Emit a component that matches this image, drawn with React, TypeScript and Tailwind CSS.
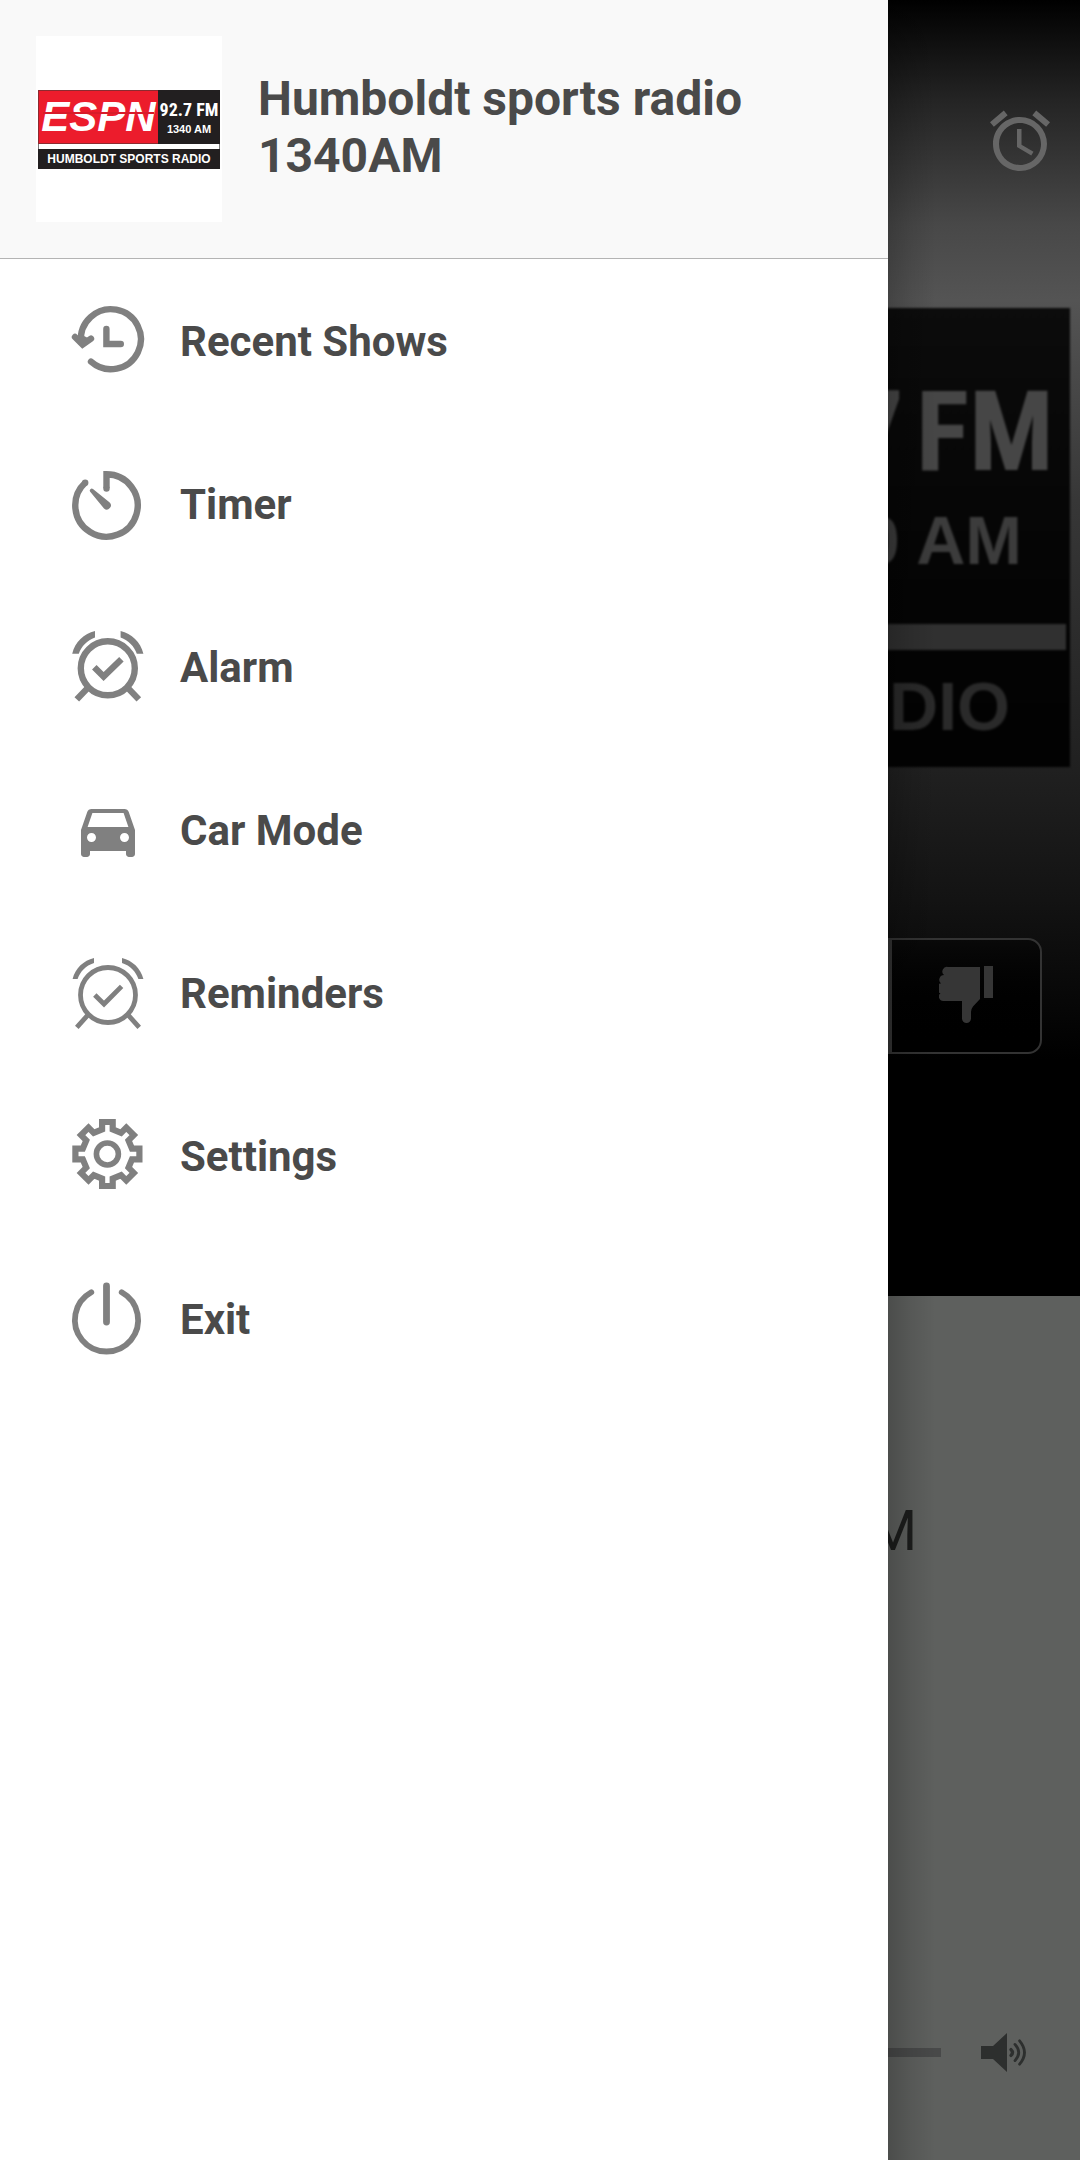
import type { ReactNode } from 'react';
import { MdAccessAlarm } from 'react-icons/md';

function Icon({ children }: { children: ReactNode }) {
  return (
    <svg
      viewBox="0 0 72 72"
      className="h-[72px] w-[72px] shrink-0 overflow-visible"
      fill="none"
      stroke="#808080"
      strokeWidth="6.4"
      aria-hidden="true"
    >
      {children}
    </svg>
  );
}

function RecentIcon() {
  return (
    <Icon>
      <g strokeLinecap="round">
        <path d="M9 36A30 30 0 1 1 19 55.7" />
        <path d="M3 31L10.6 38.6L19 32.6" strokeLinejoin="miter" />
        <path d="M34.4 23V38H48.8" />
      </g>
      <path d="M4 31L10.6 40L18 33L10 29Z" fill="#808080" stroke="none" />
    </Icon>
  );
}

function TimerIcon() {
  return (
    <Icon>
      <path d="M34.5 19V5.3A31.2 31.2 0 1 1 13.4 13.5" />
      <circle cx="34.5" cy="19.6" r="3.2" fill="#808080" stroke="none" />
      <circle cx="13.2" cy="13.7" r="3.2" fill="#808080" stroke="none" />
      <path
        d="M18.2 22.8A2 2 0 0 1 21 20L37.4 33.2A3.8 3.8 0 0 1 32 39.4Z"
        fill="#808080"
        stroke="none"
      />
    </Icon>
  );
}

function AlarmIcon() {
  return (
    <Icon>
      <circle cx="35.8" cy="36.3" r="27" />
      <path d="M22.3 35.3L31.6 44.6L49.4 27.2" />
      <path d="M4.8 67.4L16.3 55.4M66.8 67.4L55.3 55.4" />
      <g fill="#808080" stroke="none">
        <path d="M.2 21.7C3 10 12 1.5 23-1V5.4C15 8.5 9.5 14 6.8 21.7Z" />
        <path d="M71.4 21.7C68.6 10 59.6 1.5 48.6-1V5.4C56.6 8.5 62.1 14 64.8 21.7Z" />
      </g>
    </Icon>
  );
}

function ReminderIcon() {
  return (
    <Icon>
      <g strokeWidth="4.8">
        <circle cx="36" cy="37" r="27.5" />
        <path d="M22.8 37L32 46L49.6 28.4" />
        <path d="M4.8 69.4L16.2 56.6M67.2 69.4L55.8 56.6" />
      </g>
      <g fill="#808080" stroke="none">
        <path d="M.6 21C3.4 10 11.6 2.6 22 0V5C13.6 7.8 8.4 13.4 5.6 21Z" />
        <path d="M71.4 21C68.6 10 60.4 2.6 50 0V5C58.4 7.8 63.6 13.4 66.4 21Z" />
      </g>
    </Icon>
  );
}

function CarIcon() {
  return (
    <Icon>
      <path
        transform="translate(0 -1) scale(3)"
        fill="#808080"
        stroke="none"
        d="M18.92 6.01C18.72 5.42 18.16 5 17.5 5h-11c-.66 0-1.21.42-1.42 1.01L3 12v8c0 .55.45 1 1 1h1c.55 0 1-.45 1-1v-1h12v1c0 .55.45 1 1 1h1c.55 0 1-.45 1-1v-8l-2.08-5.99zM6.5 16c-.83 0-1.5-.67-1.5-1.5S5.67 13 6.5 13s1.5.67 1.5 1.5S7.33 16 6.5 16zm11 0c-.83 0-1.5-.67-1.5-1.5s.67-1.5 1.5-1.5 1.5.67 1.5 1.5-.67 1.5-1.5 1.5zM5.2 11L6.8 6.3h10.4L18.8 11H5.2z"
      />
    </Icon>
  );
}

// Eight teeth, each one a square notch turned by 45 degrees
const gearPoints = Array.from({ length: 8 }, (_, i) => {
  const a = (i * Math.PI) / 4;
  return [
    [-5.3, -24.6],
    [-5.3, -32],
    [5.3, -32],
    [5.3, -24.6],
  ]
    .map(([x, y]) => `${x * Math.cos(a) - y * Math.sin(a)},${x * Math.sin(a) + y * Math.cos(a)}`)
    .join(' ');
}).join(' ');

function SettingsIcon() {
  return (
    <Icon>
      <g transform="translate(35.4 33)" strokeWidth="6.2">
        <polygon points={gearPoints} />
        <circle r="11" strokeWidth="5.6" />
      </g>
    </Icon>
  );
}

function ExitIcon() {
  return (
    <Icon>
      <g strokeLinecap="round" strokeWidth="5.8">
        <path d="M19.3 8.2A31.6 31.6 0 1 0 49.7 8.2" />
        <path d="M34.5 2V38" strokeWidth="6.8" />
      </g>
    </Icon>
  );
}

const menu = [
  { label: 'Recent Shows', icon: <RecentIcon /> },
  { label: 'Timer', icon: <TimerIcon /> },
  { label: 'Alarm', icon: <AlarmIcon /> },
  { label: 'Car Mode', icon: <CarIcon /> },
  { label: 'Reminders', icon: <ReminderIcon /> },
  { label: 'Settings', icon: <SettingsIcon /> },
  { label: 'Exit', icon: <ExitIcon /> },
];

function StationLogo() {
  return (
    <div className="flex h-[186px] w-[186px] shrink-0 flex-col justify-center bg-white px-[2px] font-['Liberation_Sans',sans-serif] font-bold text-white">
      <div className="flex h-[54px]">
        <div className="relative flex w-[120px] shrink-0 items-center justify-center border border-r-0 border-[#8c2a30] bg-[#ec1c2c]">
          <span className="text-[42px] leading-none italic">ESPN</span>
          <span className="absolute inset-x-1 top-[21px] h-[2px] bg-[#d81c2a]" />
        </div>
        <div className="flex min-w-0 flex-1 flex-col items-center justify-center bg-[#221f20] whitespace-nowrap">
          <span className="font-['Liberation_Sans_Narrow','Roboto_Condensed','Liberation_Sans',sans-serif] text-[18px] leading-[24px]">
            92.7 FM
          </span>
          <span className="text-[11px] leading-[14px]">1340 AM</span>
        </div>
      </div>
      <div className="h-[5px] border-x border-[#777] bg-white" />
      <div className="flex h-[20px] items-center justify-center bg-[#221f20] text-[12px] leading-none whitespace-nowrap">
        HUMBOLDT SPORTS RADIO
      </div>
    </div>
  );
}

function Drawer() {
  return (
    <aside className="min-w-0 flex-1 bg-white">
      <header className="flex gap-9 border-b border-[#b4b4b4] bg-[#f9f9f9] p-9">
        <StationLogo />
        <h1 className="flex max-w-[520px] items-center pb-1 text-[48px] leading-[57px] font-bold">
          Humboldt sports radio 1340AM
        </h1>
      </header>
      <nav className="pt-px">
        <ul>
          {menu.map((item) => (
            <li key={item.label}>
              <button className="flex h-[163px] w-full items-center gap-9 px-[72px] text-left text-[42px] font-bold">
                {item.icon}
                {item.label}
              </button>
            </li>
          ))}
        </ul>
      </nav>
    </aside>
  );
}

function ThumbDownIcon() {
  return (
    <svg viewBox="0 0 54 57" className="h-[57px] w-[54px]" fill="#363636" aria-hidden="true">
      <path d="M45 0h9v32h-9z" />
      <path d="M9 1H41V33L34 40.5Q32 43 32 46V52.5A4.5 4.5 0 0 1 23 52.5V35H4.5A4.5 4.5 0 0 1 1.5 27A4.6 4.6 0 0 1 2 17.5A4.8 4.8 0 0 1 5 9A4.6 4.6 0 0 1 9 1Z" />
    </svg>
  );
}

function SpeakerIcon() {
  return (
    <svg viewBox="0 0 46 39" className="h-[39px] w-[46px] shrink-0" fill="#2d2f2e" aria-hidden="true">
      <path d="M0 13H12L26 0V39L12 26H0Z" />
      <g fill="none" stroke="#2d2f2e" strokeWidth="2.8" strokeLinecap="round">
        <path d="M30 16.6Q33 19.5 30 22.4" strokeWidth="3.4" />
        <path d="M34 11.4Q41.4 19.5 34 27.6" />
        <path d="M38.6 7.8Q48.4 19.5 38.6 31.2" />
      </g>
    </svg>
  );
}

function Player() {
  return (
    <main className="relative flex w-48 shrink-0 flex-col overflow-hidden bg-[#5e605e]">
      <section className="flex flex-col items-end bg-[linear-gradient(to_bottom,#000_0px,#242424_100px,#484848_225px,#545454_300px,#373737_500px,#202020_770px,#131313_900px,#000_1060px)] pb-[242px]">
        <button aria-label="Alarm" className="mt-[105px] mr-6 mb-[131px] text-[#666]">
          <MdAccessAlarm className="h-[72px] w-[72px]" />
        </button>

        <div className="mr-[10px] flex h-[459px] w-[200px] flex-col items-end bg-linear-to-b from-[#0c0c0c] to-[#020202] font-['Liberation_Sans',sans-serif] font-bold whitespace-nowrap blur-[1px]">
          <span className="mt-[60px] flex gap-3 pr-4 font-['Liberation_Sans_Narrow','Roboto_Condensed','Liberation_Sans',sans-serif] text-[112px] leading-[128px] text-[#464646]">
            <span>7</span>
            <span>FM</span>
          </span>
          <span className="mt-2 pr-12 text-[68px] leading-[72px] text-[#3c3c3c]">0 AM</span>
          <span className="mt-[48px] mr-1 h-[26px] w-full bg-[#303030]" />
          <span className="mt-[20px] pr-[60px] text-[68px] leading-[72px] text-[#2a2a2a]">DIO</span>
        </div>

        <button
          aria-label="Dislike"
          className="mt-[171px] mr-[38px] flex h-[116px] w-[154px] items-center justify-center rounded-r-[14px] border-2 border-l-4 border-[#333] bg-linear-to-b from-[#090909] to-black pb-1"
        >
          <ThumbDownIcon />
        </button>
      </section>

      <section className="flex flex-1 flex-col justify-between">
        <p className="mt-[203px] flex justify-end pr-[163px] text-[55px] leading-[64px] text-[#1c1d1c]">M</p>
        <div className="mb-[88px] flex items-center gap-10 pr-[53px]">
          <input
            type="range"
            aria-label="Volume"
            defaultValue={100}
            className="h-[9px] min-w-0 flex-1 appearance-none bg-[#484949] [&::-webkit-slider-thumb]:h-0 [&::-webkit-slider-thumb]:w-0 [&::-webkit-slider-thumb]:appearance-none"
          />
          <SpeakerIcon />
        </div>
      </section>

      {/* Shadow the drawer throws on the player */}
      <div className="pointer-events-none absolute inset-y-0 left-0 w-12 bg-linear-to-r from-black/20 via-black/8 to-transparent" />
    </main>
  );
}

export default function App() {
  return (
    <div className="flex min-h-screen font-[Roboto,sans-serif] text-[#4a4a4a]">
      <Drawer />
      <Player />
    </div>
  );
}
